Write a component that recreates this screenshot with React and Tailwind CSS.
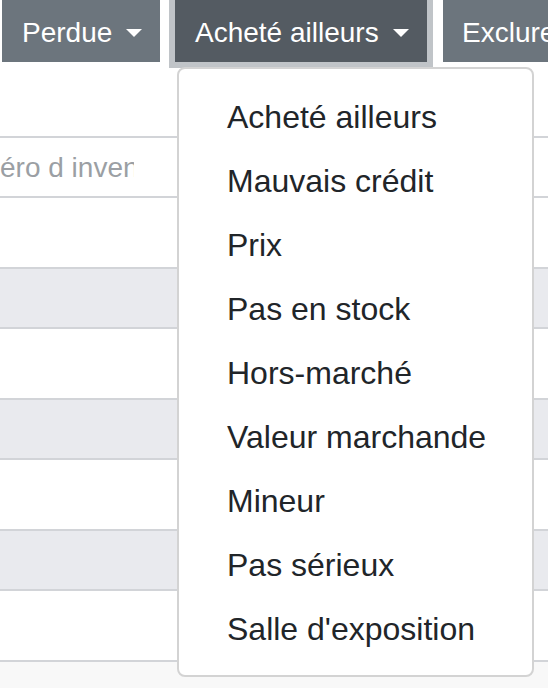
import React from "react";

const items = [
  "Acheté ailleurs",
  "Mauvais crédit",
  "Prix",
  "Pas en stock",
  "Hors-marché",
  "Valeur marchande",
  "Mineur",
  "Pas sérieux",
  "Salle d'exposition",
];

const Caret = () => (
  <span className="ml-[14px] inline-block w-0 h-0 border-t-[8px] border-t-white border-x-[8px] border-x-transparent" />
);

const Row = ({ gray, tall, children }) => (
  <div
    className={`border-b-2 border-[#d2d4d8] flex items-center ${tall ? "h-[71px]" : "h-[60px]"} ${
      gray ? "bg-[#e9eaee]" : "bg-white"
    }`}
  >
    {children}
  </div>
);

export default function App() {
  return (
    <div
      className="relative w-[548px] h-[688px] overflow-hidden bg-white text-[#212529]"
      style={{ fontFamily: '"Liberation Sans", Arial, sans-serif' }}
    >
      {/* Button bar */}
      <div className="flex h-[62px] w-[600px]">
        <button className="shrink-0 ml-[2px] w-[158px] h-[62px] pl-[20px] pt-[3px] flex items-center bg-[#6c757d] text-white text-[28px]">
          Perdue
          <Caret />
        </button>
        <button className="shrink-0 ml-[15px] w-[252px] h-[62px] pl-[20px] pt-[3px] flex items-center bg-[#545b62] text-white text-[28px] shadow-[0_0_0_6px_rgba(130,138,145,0.5)] relative z-10">
          Acheté ailleurs
          <Caret />
        </button>
        <button className="shrink-0 ml-[16px] w-[140px] h-[62px] pl-[19px] pt-[3px] flex items-center bg-[#6c757d] text-white text-[28px] whitespace-nowrap">
          Exclure
        </button>
      </div>

      {/* Table behind */}
      <div className="border-b-2 border-[#d2d4d8] h-[76px] bg-white" />
      <Row>
        <div className="w-[134px] pt-[2px] overflow-hidden whitespace-nowrap text-[28px] text-[#9b9fa4]">éro d inven</div>
      </Row>
      <Row tall />
      <Row gray />
      <Row tall />
      <Row gray />
      <Row tall />
      <Row gray />
      <Row tall />
      <div className="h-[30px] bg-[#f8f8f8] flex items-end">
        <span className="ml-[52px] w-[6px] h-[2px] bg-[#444]" />
        <span className="ml-[263px] w-[20px] h-[3px] bg-[#333]" />
      </div>

      {/* Dropdown menu */}
      <div className="absolute left-[177px] top-[67px] w-[357px] h-[610px] bg-white border-2 border-[#d3d3d3] rounded-[8px] py-[16px] z-20">
        {items.map((item) => (
          <div key={item} className="h-[64px] pl-[48px] flex items-center text-[32px] leading-[48px] whitespace-nowrap">
            {item}
          </div>
        ))}
      </div>
    </div>
  );
}
